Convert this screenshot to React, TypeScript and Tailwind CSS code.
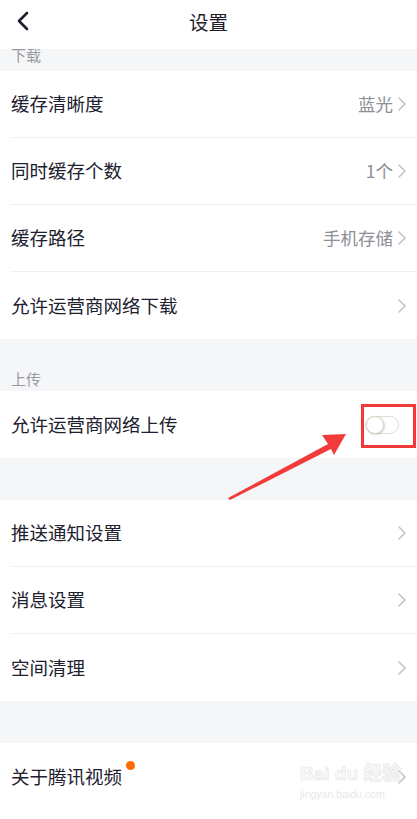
import React from 'react';

const font = { fontFamily: '"Noto Sans CJK SC", "Noto Sans", sans-serif' };

const Chevron = () => (
  <svg width="10" height="16" viewBox="0 0 10 16" className="ml-1">
    <path d="M2 2 L8 8 L2 14" fill="none" stroke="#c4c4ca" strokeWidth="1.6" strokeLinecap="round" strokeLinejoin="round" />
  </svg>
);

interface RowProps {
  label: string;
  value?: string;
  divider?: boolean;
  dot?: boolean;
  right?: React.ReactNode;
}

const Row: React.FC<RowProps> = ({ label, value, divider, dot, right }) => (
  <div className="bg-white pl-[10px]">
    <div className={`h-[67px] flex items-center justify-between pr-[10px] ${divider ? 'border-b border-[#f0f0f2]' : ''}`}>
      <div className="relative flex items-center">
        <span className="text-[18.5px] text-[#20202e] pl-[1px]">{label}</span>
        {dot && <span className="absolute -right-[13px] -top-[2px] w-[9px] h-[9px] rounded-full bg-[#ff6a00]" />}
      </div>
      {right ?? (
        <div className="flex items-center">
          {value && <span className="text-[17.5px] text-[#8e8e96]">{value}</span>}
          <Chevron />
        </div>
      )}
    </div>
  </div>
);

const Toggle = () => (
  <div className="w-[34px] h-[18px] rounded-full border border-[#e6ddd2] bg-white relative mr-[8px]">
    <div className="absolute left-0 top-[-1px] w-[18px] h-[18px] rounded-full bg-white border border-[#ddd6cc] shadow-[1px_1px_2px_rgba(0,0,0,0.18)]" />
  </div>
);

export default function App() {
  return (
    <div className="w-[417px] h-[819px] overflow-hidden bg-[#f5f6f8] relative flex flex-col" style={font}>
      {/* Header */}
      <div className="h-[49px] shrink-0 bg-white flex items-center justify-center relative">
        <svg width="14" height="20" viewBox="0 0 14 20" className="absolute left-[16px] top-[11px]">
          <path d="M11 2 L3 10 L11 18" fill="none" stroke="#1e1e2c" strokeWidth="2.6" strokeLinecap="round" strokeLinejoin="round" />
        </svg>
        <span className="text-[19.5px] text-[#1e1e2c] -mt-[5px]">设置</span>
      </div>

      {/* 下载 */}
      <div className="h-[22px] shrink-0 overflow-hidden pl-[11px]">
        <span className="block text-[15px] text-[#9a9aa2] -mt-[5px]">下载</span>
      </div>
      <Row label="缓存清晰度" value="蓝光" divider />
      <Row label="同时缓存个数" value="1个" divider />
      <Row label="缓存路径" value="手机存储" divider />
      <Row label="允许运营商网络下载" />

      {/* 上传 */}
      <div className="h-[52px] shrink-0 flex items-end pl-[11px] pb-[1px]">
        <span className="text-[15px] text-[#9a9aa2]">上传</span>
      </div>
      <Row label="允许运营商网络上传" right={<Toggle />} />

      <div className="h-[42px] shrink-0" />
      <Row label="推送通知设置" divider />
      <Row label="消息设置" divider />
      <Row label="空间清理" />

      <div className="h-[42px] shrink-0" />
      <div className="flex-1 bg-white">
        <Row label="关于腾讯视频" dot />
      </div>

      {/* annotation: red box + arrow */}
      <div className="absolute left-[361px] top-[404px] w-[55px] h-[44px] border-[3px] border-[#f03a3a]" />
      <svg className="absolute left-0 top-0 pointer-events-none" width="417" height="819">
        <polygon points="228,498 328,444 322,435 346,434 334,455 331,449 230,500" fill="#f23c3c" />
      </svg>

      {/* watermark */}
      <div className="absolute left-[300px] top-[764px] leading-none whitespace-nowrap">
        <div className="text-[19px] font-bold" style={{ fontFamily: '"Liberation Sans", "Noto Sans CJK SC", sans-serif', WebkitTextStroke: '0.6px #e4e4e4', color: '#fbfbfb' }}>Bai du 经验</div>
        <div className="text-[10.5px] mt-[6px] text-[#e8e8e8]" style={{ fontFamily: '"Liberation Sans", sans-serif' }}>jingyan.baidu.com</div>
      </div>
    </div>
  );
}
